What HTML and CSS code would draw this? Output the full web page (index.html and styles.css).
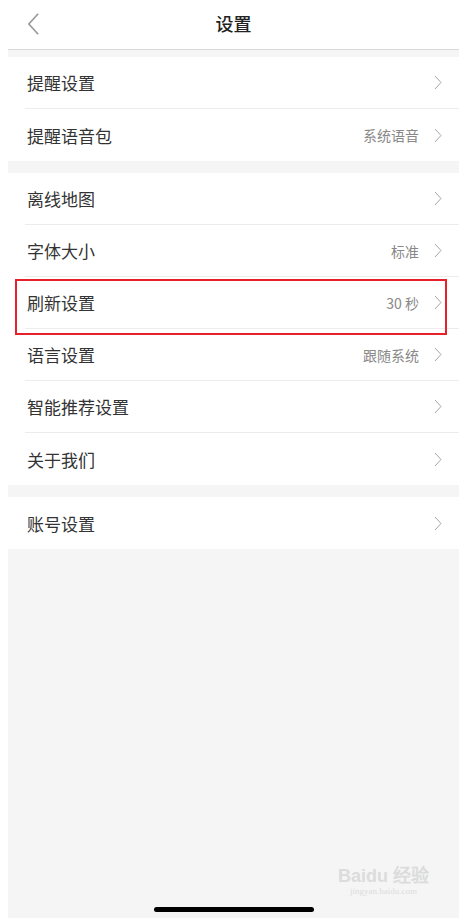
FILE: index.html
```html
<!DOCTYPE html>
<html lang="zh-CN">
<head>
  <meta charset="UTF-8">
  <meta name="viewport" content="width=device-width, initial-scale=1.0">
  <title>设置</title>
  <link rel="stylesheet" href="styles.css">
</head>
<body>
  <div class="screen">
    <div class="header">
      <svg class="back" viewBox="0 0 14 24">
        <polyline points="12,1 2,12 12,23" fill="none" stroke="#9a9a9a" stroke-width="1.8"/>
      </svg>
      <span class="title">设置</span>
    </div>

    <div class="group first">
      <div class="row"><span class="label">提醒设置</span><svg class="arrow" viewBox="0 0 8 15"><polyline points="1,1 7,7.5 1,14"/></svg></div>
      <div class="row"><span class="label">提醒语音包</span><span class="value">系统语音</span><svg class="arrow" viewBox="0 0 8 15"><polyline points="1,1 7,7.5 1,14"/></svg></div>
    </div>

    <div class="group">
      <div class="row"><span class="label">离线地图</span><svg class="arrow" viewBox="0 0 8 15"><polyline points="1,1 7,7.5 1,14"/></svg></div>
      <div class="row"><span class="label">字体大小</span><span class="value">标准</span><svg class="arrow" viewBox="0 0 8 15"><polyline points="1,1 7,7.5 1,14"/></svg></div>
      <div class="row marked"><span class="label">刷新设置</span><span class="value">30 秒</span><svg class="arrow" viewBox="0 0 8 15"><polyline points="1,1 7,7.5 1,14"/></svg></div>
      <div class="row"><span class="label">语言设置</span><span class="value">跟随系统</span><svg class="arrow" viewBox="0 0 8 15"><polyline points="1,1 7,7.5 1,14"/></svg></div>
      <div class="row"><span class="label">智能推荐设置</span><svg class="arrow" viewBox="0 0 8 15"><polyline points="1,1 7,7.5 1,14"/></svg></div>
      <div class="row"><span class="label">关于我们</span><svg class="arrow" viewBox="0 0 8 15"><polyline points="1,1 7,7.5 1,14"/></svg></div>
    </div>

    <div class="group">
      <div class="row"><span class="label">账号设置</span><svg class="arrow" viewBox="0 0 8 15"><polyline points="1,1 7,7.5 1,14"/></svg></div>
    </div>

    <div class="footer">
      <div class="watermark">
        <span class="wm-logo">Bai<b>du</b> 经验</span>
        <span class="wm-url">jingyan.baidu.com</span>
      </div>
      <div class="home-bar"></div>
    </div>
  </div>
</body>
</html>
```

FILE: styles.css
```css
*, *::after {
  box-sizing: border-box;
}

body {
  margin: 0 0 1px 8px;
  background: #fff;
  font-family: "Noto Sans CJK SC", "Noto Sans", sans-serif;
  color: #333;
}

.screen {
  min-height: 918px;
  background: #f5f5f5;
  display: flex;
  flex-direction: column;
}

.header {
  height: 50px;
  padding-bottom: 3px;
  background: #fff;
  border-bottom: 1px solid #d9d9d9;
  display: flex;
  align-items: center;
  justify-content: center;
  position: relative;
}

.back {
  position: absolute;
  left: 19px;
  top: 12px;
  width: 13px;
  height: 24px;
}

.title {
  font-size: 18px;
  font-weight: 500;
  color: #222;
}

.group {
  background: #fff;
  margin-top: 12px;
}

.group.first {
  margin-top: 7px;
}

.row {
  height: 52px;
  margin-left: 17px;
  padding: 0 17px 0 2px;
  display: flex;
  align-items: center;
  border-bottom: 1px solid #ececec;
  position: relative;
}

.row:last-child {
  border-bottom: none;
}

.label {
  flex: 1;
  font-size: 17px;
  color: #333;
}

.value {
  font-size: 14px;
  color: #888;
  margin-right: 15px;
}

.arrow {
  width: 8px;
  height: 15px;
  fill: none;
  stroke: #a6a6a6;
  stroke-width: 1;
}

.row.marked::after {
  content: "";
  position: absolute;
  left: -10px;
  top: 2px;
  width: 432px;
  height: 56px;
  border: 2px solid #e8202a;
}

.footer {
  margin-top: auto;
  display: flex;
  justify-content: center;
  padding-bottom: 6px;
  position: relative;
}

.home-bar {
  width: 160px;
  height: 5px;
  border-radius: 3px;
  background: #000;
}

.watermark {
  position: absolute;
  right: 30px;
  bottom: 22px;
  display: flex;
  flex-direction: column;
  align-items: center;
  color: #dcdcdc;
}

.wm-logo {
  font-family: "Liberation Sans", sans-serif;
  font-size: 18px;
  font-weight: bold;
  line-height: 20px;
}

.wm-url {
  font-family: "Liberation Serif", serif;
  font-size: 9px;
  line-height: 10px;
}
```
